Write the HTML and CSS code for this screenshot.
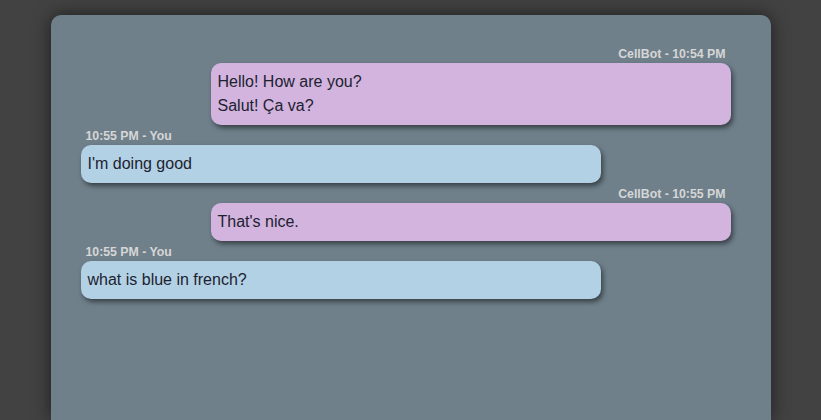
FILE: index.html
```html
<!DOCTYPE html>
<html>
<head>
<meta charset="utf-8">
<link rel="stylesheet" href="styles.css">
</head>
<body>
<div class="page">
  <div class="chat">
    <div class="msg bot">
      <div class="meta">CellBot - 10:54 PM</div>
      <div class="bubble">Hello! How are you?<br>Salut! Ça va?</div>
    </div>
    <div class="msg user">
      <div class="meta">10:55 PM - You</div>
      <div class="bubble">I'm doing good</div>
    </div>
    <div class="msg bot">
      <div class="meta">CellBot - 10:55 PM</div>
      <div class="bubble">That's nice.</div>
    </div>
    <div class="msg user">
      <div class="meta">10:55 PM - You</div>
      <div class="bubble">what is blue in french?</div>
    </div>
  </div>
</div>
</body>
</html>
```
FILE: styles.css
```css
html, body {
  margin: 0;
  padding: 0;
  height: 100%;
  background: #424242;
  font-family: "Liberation Sans", Arial, sans-serif;
  overflow: hidden;
}
.page {
  padding-top: 15px;
  height: 100%;
  box-sizing: border-box;
  display: flex;
  flex-direction: column;
}
.chat {
  flex: 1;
  width: 720px;
  margin: 0 auto;
  box-sizing: border-box;
  background: #6f808b;
  border-radius: 10px 10px 0 0;
  box-shadow: 0 0 18px rgba(0, 0, 0, 0.55);
  padding: 29px 40px 0 30px;
  display: flex;
  flex-direction: column;
}
.msg {
  display: flex;
  flex-direction: column;
  margin-top: 3px;
  width: 520px;
}
.msg:first-child {
  margin-top: 2px;
}
.msg.bot {
  align-self: flex-end;
}
.msg.user {
  align-self: flex-start;
}
.meta {
  font-size: 12.3px;
  font-weight: bold;
  line-height: 16px;
  color: #d6d6d6;
  margin-bottom: 1px;
  padding: 0 5px;
}
.bot .meta {
  text-align: right;
}
.bubble {
  font-size: 16px;
  line-height: 24px;
  color: #1d2230;
  padding: 7px 7px;
  border-radius: 10px;
  box-shadow: 2px 3px 5px rgba(0, 0, 0, 0.5);
}
.bot .bubble {
  background: #d2b4de;
}
.user .bubble {
  background: #b3d1e5;
}
```
